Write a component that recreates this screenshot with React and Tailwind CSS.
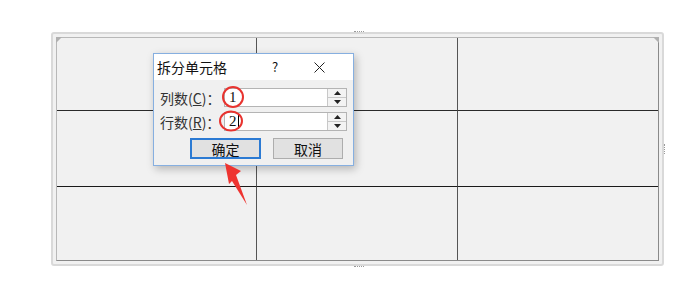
const cjk = { fontFamily: '"Noto Sans CJK SC", "Noto Sans", sans-serif' };

function Spinner() {
  return (
    <div className="flex w-[19px] flex-col border-l border-[#c8c8c8] bg-[#f3f3f3]">
      <div className="flex flex-1 items-center justify-center border-b border-[#c8c8c8]">
        <svg width="7" height="4" viewBox="0 0 7 4">
          <polygon points="0,4 3.5,0 7,4" fill="#222" />
        </svg>
      </div>
      <div className="flex flex-1 items-center justify-center">
        <svg width="7" height="4" viewBox="0 0 7 4">
          <polygon points="0,0 7,0 3.5,4" fill="#222" />
        </svg>
      </div>
    </div>
  );
}

function Field({ label, letter, value, cursor }) {
  return (
    <div className="flex h-[19px] items-center">
      <div className="w-[70px] shrink-0 whitespace-nowrap pl-[6px] text-[14px] leading-none text-[#333]">
        {label}(<span className="underline">{letter}</span>)：
      </div>
      <div className="flex h-full w-[123px] shrink-0 border border-[#b4b4b4] bg-white">
        <div
          className="flex flex-1 items-center pl-[4px] text-[15px] leading-none text-[#111]"
          style={{ fontFamily: '"Liberation Serif", serif' }}
        >
          {value}
          {cursor && <span className="ml-[1px] inline-block h-[14px] w-px bg-black" />}
        </div>
        <Spinner />
      </div>
    </div>
  );
}

export default function App() {
  return (
    <div className="relative h-[293px] w-[700px] overflow-hidden bg-white pl-[51px] pt-[32px]" style={cjk}>
      {/* table frame */}
      <div className="relative h-[234px] w-[613px] rounded-[3px] border-2 border-[#d9d9d9] bg-[#f1f1f1] p-[3px]">
        <div className="grid h-full grid-cols-3 grid-rows-[73px_76px_1fr] border border-t-[#b8b8b8] border-l-[#b8b8b8] border-r-[#8a8a8a] border-b-[#8a8a8a]">
          <div className="border-r border-b border-r-[#555] border-b-[#2a2a2a]" />
          <div className="border-r border-b border-r-[#555] border-b-[#2a2a2a]" />
          <div className="border-b border-b-[#2a2a2a]" />
          <div className="border-r border-b border-r-[#555] border-b-[#1a1a1a]" />
          <div className="border-r border-b border-r-[#555] border-b-[#1a1a1a]" />
          <div className="border-b border-b-[#1a1a1a]" />
          <div className="border-r border-r-[#555]" />
          <div className="border-r border-r-[#555]" />
          <div />
        </div>
        {/* corner marks and resize dots */}
        <svg className="absolute left-[3px] top-[3px]" width="6" height="6">
          <polygon points="0,0 6,0 0,6" fill="#b0b0b0" />
        </svg>
        <svg className="absolute right-[3px] top-[3px]" width="6" height="6">
          <polygon points="0,0 6,0 6,6" fill="#b0b0b0" />
        </svg>
        <div className="absolute left-[301px] top-[-3px] h-[2px] w-[10px] border-t border-dotted border-[#999]" />
        <div className="absolute bottom-[-3px] left-[301px] h-[2px] w-[10px] border-b border-dotted border-[#999]" />
        <div className="absolute right-[-3px] top-[110px] h-[10px] w-[2px] border-r border-dotted border-[#999]" />
      </div>

      {/* dialog */}
      <div className="absolute left-[153px] top-[53px] h-[113px] w-[201px] border border-[#86afe0] bg-[#f0f0f0] shadow-[2px_3px_8px_rgba(0,0,0,0.25)]">
        <div className="flex h-[26px] items-center bg-white pl-[3px] text-[14px] text-[#111]">
          <span className="w-[114px]">拆分单元格</span>
          <span className="w-[43px] pl-[1px] text-[13px]">?</span>
          <svg width="11" height="11" viewBox="0 0 11 11">
            <path d="M0.5 0.5 L10.5 10.5 M10.5 0.5 L0.5 10.5" stroke="#222" strokeWidth="1" />
          </svg>
        </div>
        <div className="flex flex-col gap-[5px] pt-[8px]">
          <Field label="列数" letter="C" value="1" />
          <Field label="行数" letter="R" value="2" cursor />
        </div>
        <div className="mt-[7px] flex gap-[12px] pl-[36px]">
          <button className="h-[21px] w-[71px] border-2 border-[#2b7ad3] bg-[#e1e1e1] text-[14px] leading-none text-[#111]">
            确定
          </button>
          <button className="h-[21px] w-[70px] border border-[#adadad] bg-[#e1e1e1] text-[14px] leading-none text-[#111]">
            取消
          </button>
        </div>
      </div>

      {/* annotations */}
      <svg className="pointer-events-none absolute left-0 top-0" width="700" height="293">
        <ellipse cx="233" cy="97" rx="10" ry="10" fill="none" stroke="#e8332f" strokeWidth="2" />
        <ellipse cx="231" cy="121" rx="11" ry="9.5" fill="none" stroke="#e8332f" strokeWidth="2" />
        <polygon points="225,163 241,171 236,175 247,205 232,181 229,184" fill="#ee3430" />
      </svg>
    </div>
  );
}
